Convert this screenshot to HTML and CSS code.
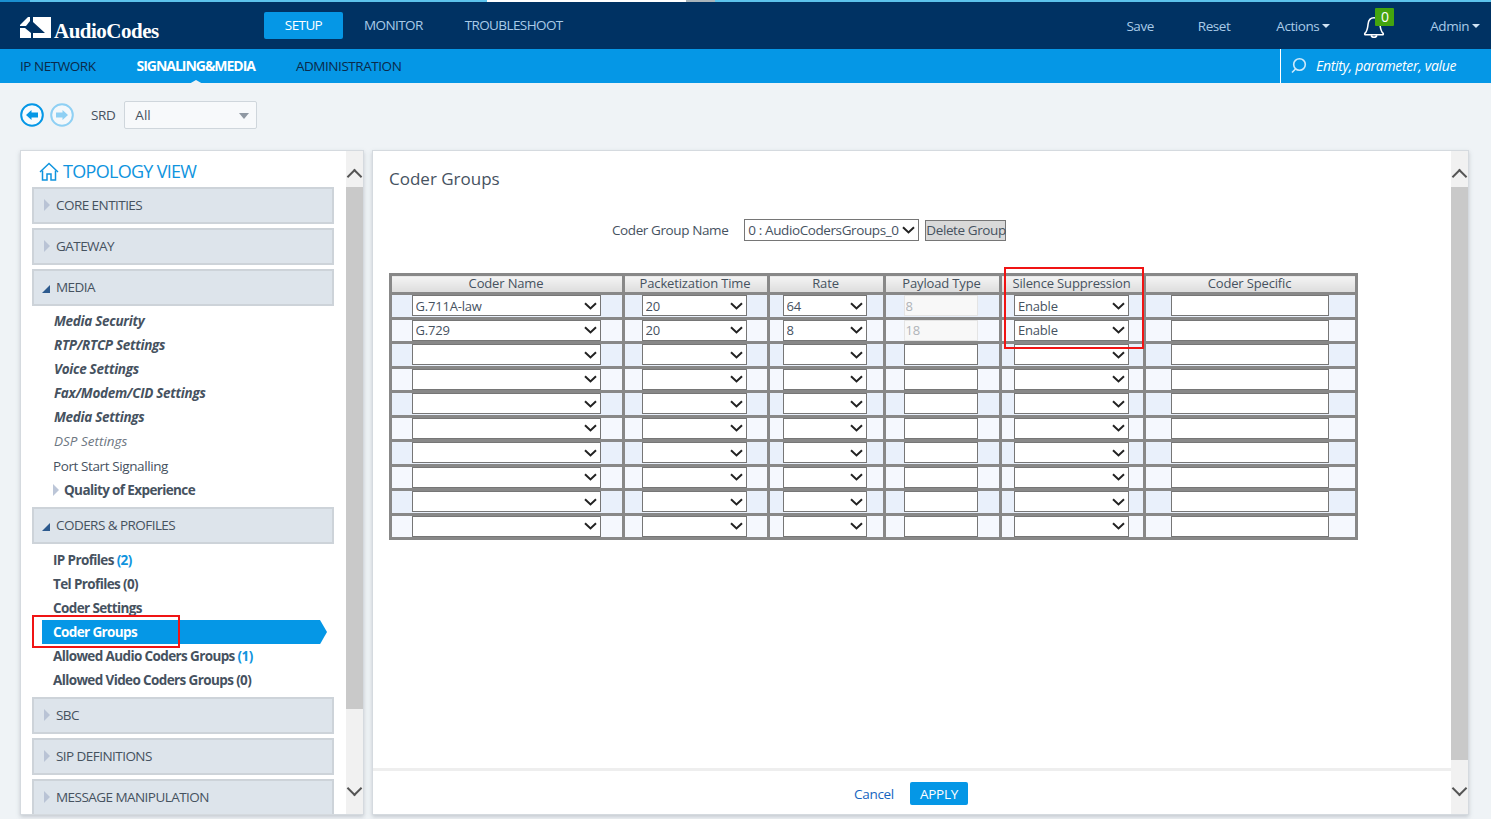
FILE: index.html
```html
<!DOCTYPE html>
<html lang="en">
<head>
    <meta charset="UTF-8">
    <title>AudioCodes - Coder Groups</title>
    <link rel="stylesheet" href="styles.css">
</head>
<body>
    <div class="tabstrip"></div>
    <header class="topbar">
        <div class="logo">
            <svg class="logo-mark" width="31" height="21" viewBox="0 0 31 21">
                <path fill="#fff" d="M0 8 L8 0 L10 0 L10 4 L6 9 L0 9 Z"/>
                <path fill="#fff" d="M0 11 L5 11 L11 16 L11 21 L0 21 Z"/>
                <path fill="#fff" d="M13 0 L31 0 L31 21 L13 21 L13 16 L25 16 L13 5 Z"/>
            </svg>
            <span class="logo-text">AudioCodes</span>
        </div>
        <nav class="main-nav">
            <a class="main-tab active">SETUP</a>
            <a class="main-tab">MONITOR</a>
            <a class="main-tab">TROUBLESHOOT</a>
        </nav>
        <div class="top-actions">
            <a class="save">Save</a>
            <a class="reset">Reset</a>
            <a class="actions">Actions<i class="caret"></i></a>
            <span class="bell">
                <svg width="22" height="26" viewBox="0 0 24 26" fill="none" stroke="#fff" stroke-width="1.7">
                    <path d="M2 20 C5 17 5 14 5.5 10 C6 5 9 3 12 3 C15 3 18 5 18.5 10 C19 14 19 17 22 20 C22.5 21 22 21.5 21 21.5 L3 21.5 C2 21.5 1.5 21 2 20 Z"/>
                    <path d="M9 22 C9.5 25 14.5 25 15 22"/>
                </svg>
                <b class="badge">0</b>
            </span>
            <a class="admin">Admin<i class="caret"></i></a>
        </div>
    </header>

    <div class="subbar">
        <nav class="sub-nav">
            <a class="sub-tab">IP NETWORK</a>
            <a class="sub-tab active">SIGNALING&amp;MEDIA</a>
            <a class="sub-tab">ADMINISTRATION</a>
        </nav>
        <div class="search">
            <svg width="17" height="17" viewBox="0 0 17 17" fill="none" stroke="#cfeafb" stroke-width="1.6">
                <circle cx="9.5" cy="7.5" r="5.8"/>
                <path d="M5.5 12 L2 15.5"/>
            </svg>
            <span>Entity, parameter, value</span>
        </div>
    </div>

    <div class="toolbar">
        <span class="round-btn">
            <svg width="24" height="24" viewBox="0 0 24 24">
                <circle cx="12" cy="12" r="10.8" fill="#f7fbfe" stroke="#0597e6" stroke-width="2"/>
                <path fill="#0597e6" d="M6 12 L11.5 7 L11.5 9.5 L18 9.5 L18 14.5 L11.5 14.5 L11.5 17 Z"/>
            </svg>
        </span>
        <span class="round-btn">
            <svg width="24" height="24" viewBox="0 0 24 24">
                <circle cx="12" cy="12" r="10.8" fill="#f4f8fb" stroke="#8fd0f4" stroke-width="2"/>
                <path fill="#8fd0f4" d="M18 12 L12.5 7 L12.5 9.5 L6 9.5 L6 14.5 L12.5 14.5 L12.5 17 Z"/>
            </svg>
        </span>
        <label class="srd-label">SRD</label>
        <div class="srd-select">All<i class="srd-arrow"></i></div>
    </div>

    <div class="workspace">
        <aside class="panel side-panel">
            <div class="side-scroll">
                <h2 class="topology">
                    <svg width="20" height="19" viewBox="0 0 20 19" fill="none" stroke="#0f94de" stroke-width="1.5">
                        <path d="M1 10 L10 1.5 L19 10"/>
                        <path d="M3.5 8.5 L3.5 18 L8 18 L8 12 L12 12 L12 18 L16.5 18 L16.5 8.5"/>
                    </svg>
                    TOPOLOGY VIEW
                </h2>
                <div class="group closed">CORE ENTITIES</div>
                <div class="group closed">GATEWAY</div>
                <div class="group open">MEDIA</div>
                <ul class="items media-items">
                    <li class="strong-em">Media Security</li>
                    <li class="strong-em">RTP/RTCP Settings</li>
                    <li class="strong-em">Voice Settings</li>
                    <li class="strong-em">Fax/Modem/CID Settings</li>
                    <li class="strong-em">Media Settings</li>
                    <li class="light-em">DSP Settings</li>
                    <li>Port Start Signalling</li>
                    <li class="strong sub-parent">Quality of Experience</li>
                </ul>
                <div class="group open">CODERS &amp; PROFILES</div>
                <ul class="items coder-items">
                    <li class="strong">IP Profiles <span class="count">(2)</span></li>
                    <li class="strong">Tel Profiles (0)</li>
                    <li class="strong">Coder Settings</li>
                    <li class="strong selected">Coder Groups</li>
                    <li class="strong">Allowed Audio Coders Groups <span class="count">(1)</span></li>
                    <li class="strong">Allowed Video Coders Groups (0)</li>
                </ul>
                <div class="group closed">SBC</div>
                <div class="group closed">SIP DEFINITIONS</div>
                <div class="group closed">MESSAGE MANIPULATION</div>
            </div>
            <div class="scrollbar side-bar">
                <span class="chev up"></span>
                <span class="thumb"></span>
                <span class="chev down"></span>
            </div>
        </aside>

        <main class="panel main-panel">
            <div class="main-col">
                <div class="main-body">
                    <h1 class="page-title">Coder Groups</h1>
                    <div class="group-picker">
                        <label>Coder Group Name</label>
                        <select class="group-select"><option>0 : AudioCodersGroups_0</option></select>
                        <button class="delete-btn">Delete Group</button>
                    </div>
                    <table class="coders">
                        <colgroup>
                            <col class="c1"><col class="c2"><col class="c3"><col class="c4"><col class="c5"><col class="c6">
                        </colgroup>
                        <thead>
                            <tr>
                                <th>Coder Name</th>
                                <th>Packetization Time</th>
                                <th>Rate</th>
                                <th>Payload Type</th>
                                <th>Silence Suppression</th>
                                <th>Coder Specific</th>
                            </tr>
                        </thead>
                        <tbody id="coder-rows"></tbody>
                    </table>
                </div>
                <div class="main-footer">
                    <a class="cancel">Cancel</a>
                    <button class="apply">APPLY</button>
                </div>
            </div>
            <div class="scrollbar main-bar">
                <span class="chev up"></span>
                <span class="thumb"></span>
                <span class="chev down"></span>
            </div>
        </main>
    </div>

    <!-- annotations drawn on the screenshot -->
    <div class="mark mark-suppression"></div>
    <div class="mark mark-groups"></div>

    <script>
        var rows = [
            ['G.711A-law', '20', '64', '8', 'Enable'],
            ['G.729', '20', '8', '18', 'Enable']
        ];
        var body = document.getElementById('coder-rows');
        function sel(cls, val) {
            return '<select class="' + cls + '"><option>' + val + '</option></select>';
        }
        for (var i = 0; i < 10; i++) {
            var r = rows[i] || ['', '', '', '', ''];
            var tr = document.createElement('tr');
            tr.innerHTML =
                '<td>' + sel('s-name', r[0]) + '</td>' +
                '<td>' + sel('s-time', r[1]) + '</td>' +
                '<td>' + sel('s-rate', r[2]) + '</td>' +
                '<td><input class="i-type" value="' + r[3] + '"' + (r[3] ? ' disabled' : '') + '></td>' +
                '<td>' + sel('s-supp', r[4]) + '</td>' +
                '<td><input class="i-spec"></td>';
            body.appendChild(tr);
        }
    </script>
</body>
</html>
```

FILE: styles.css
```css
* {
    margin: 0;
    padding: 0;
    box-sizing: border-box;
}

html, body {
    height: 819px;
    overflow: hidden;
}

body {
    background: #eff3f6;
    font-family: "Open Sans", "Noto Sans", sans-serif;
    font-size: 13px;
    color: #46525f;
}

/* browser tab strip left at the top of the picture */
.tabstrip {
    height: 2px;
    background: linear-gradient(to right,
        #1a8fd0 0, #1a8fd0 30px,
        #5cc3ec 30px, #5cc3ec 487px,
        #fff 487px, #fff 686px,
        #a9b4ba 686px, #a9b4ba 715px,
        #5cc3ec 715px);
}

/* top bars */
.topbar {
    height: 47px;
    background: #003263;
    display: flex;
    align-items: center;
    padding-left: 20px;
    color: #a9cbe8;
}

.logo {
    display: flex;
    align-items: flex-end;
    width: 244px;
    padding-top: 4px;
}

.logo-mark {
    flex: none;
}

.logo-text {
    font-family: "Liberation Serif", serif;
    font-size: 21px;
    font-weight: bold;
    letter-spacing: -0.5px;
    color: #fff;
    margin: 0 0 -6px 3px;
}

.main-nav {
    display: flex;
    align-items: center;
}

.main-tab {
    font-size: 13.5px;
    padding: 0 21px;
    line-height: 27px;
    letter-spacing: -0.6px;
}

.main-tab.active {
    background: #0597e6;
    color: #fff;
    border-radius: 2px;
    width: 79px;
    padding: 0;
    text-align: center;
}

.top-actions {
    margin-left: auto;
    display: flex;
    align-items: center;
    font-size: 13.5px;
    letter-spacing: -0.45px;
    padding-right: 11px;
}

.reset { margin-left: 44px; }
.actions { margin-left: 46px; }

.caret {
    display: inline-block;
    border: 4px solid transparent;
    border-top: 4px solid #cfe3f4;
    border-bottom: 0;
    margin-left: 3px;
    vertical-align: 3px;
}

.bell {
    position: relative;
    margin-left: 33px;
    width: 24px;
    height: 26px;
    top: 1px;
}

.badge {
    position: absolute;
    left: 12px;
    top: -6px;
    width: 19px;
    height: 18px;
    background: #44a40e;
    border-radius: 1px;
    color: #fff;
    font-weight: normal;
    font-size: 14px;
    line-height: 18px;
    text-align: center;
}

.admin { margin-left: 43px; }

.subbar {
    height: 34px;
    background: #0597e6;
    display: flex;
    align-items: stretch;
    padding-left: 20px;
}

.sub-nav {
    display: flex;
    align-items: center;
    gap: 41px;
    padding-bottom: 1px;
}

.sub-tab {
    font-size: 13.5px;
    letter-spacing: -0.45px;
    color: #0a2a4a;
    position: relative;
}

.sub-tab.active {
    color: #fff;
    font-weight: bold;
    font-size: 14px;
    letter-spacing: -1.03px;
}

.sub-tab.active::after {
    content: "";
    position: absolute;
    left: 50%;
    margin-left: -7px;
    bottom: -9px;
    border: 7px solid transparent;
    border-top: 0;
    border-bottom: 4px solid #eff3f6;
}

.search {
    margin-left: auto;
    width: 211px;
    border-left: 1px solid #fff;
    display: flex;
    align-items: center;
    gap: 9px;
    padding: 0 0 1px 9px;
    color: #fff;
    font-style: italic;
    font-size: 14px;
    letter-spacing: -0.3px;
}

/* toolbar with back / forward and SRD */
.toolbar {
    height: 67px;
    display: flex;
    align-items: center;
    padding-left: 20px;
    padding-bottom: 3px;
}

.round-btn {
    width: 24px;
    height: 24px;
    margin-right: 6px;
}

.srd-label {
    margin-left: 11px;
    font-size: 13.5px;
    letter-spacing: -0.4px;
}

.srd-select {
    position: relative;
    width: 133px;
    height: 28px;
    margin-left: 9px;
    padding-left: 10px;
    line-height: 27px;
    font-size: 13.5px;
    background: #f7f9fb;
    border: 1px solid #cfd6dc;
    border-radius: 2px;
}

.srd-arrow {
    position: absolute;
    right: 7px;
    top: 11px;
    border: 5px solid transparent;
    border-top: 6px solid #8f98a3;
    border-bottom: 0;
}

/* panels */
.workspace {
    display: flex;
    gap: 8px;
    padding-left: 20px;
    height: 665px;
}

.panel {
    background: #fff;
    border: 1px solid #d5dadf;
    box-shadow: 0 2px 4px rgba(120, 130, 140, 0.35);
    display: flex;
    overflow: hidden;
}

.side-panel {
    width: 344px;
}

.main-panel {
    width: 1097px;
}

.side-scroll {
    flex: 1;
    padding: 9px 0 0 11px;
    overflow: hidden;
}

.scrollbar {
    width: 17px;
    background: #f1f1f1;
    display: flex;
    flex-direction: column;
    align-items: stretch;
    position: relative;
    padding-top: 36px;
}

.thumb {
    background: #c9c9c9;
}

.side-bar .thumb { height: 522px; }
.main-bar .thumb { height: 573px; }

.chev {
    position: absolute;
    left: 1px;
    width: 13px;
    height: 11px;
}

.chev::before {
    content: "";
    position: absolute;
    left: 2px;
    width: 9px;
    height: 9px;
    border-left: 2.5px solid #555;
    border-top: 2.5px solid #555;
}

.chev.up { top: 17px; }
.chev.up::before { top: 3px; transform: rotate(45deg); }
.chev.down { bottom: 18px; }
.chev.down::before { top: -2px; transform: rotate(225deg); }

/* tree */
.topology {
    display: flex;
    align-items: center;
    gap: 4px;
    height: 26px;
    padding: 0 0 4px 7px;
    font-size: 18px;
    font-weight: normal;
    letter-spacing: -0.7px;
    color: #0f94de;
}

.group {
    position: relative;
    width: 302px;
    height: 37px;
    margin-bottom: 4px;
    padding-left: 22px;
    background: #dde4eb;
    border: 2px solid #cdd3d9;
    line-height: 33px;
    font-size: 13.5px;
    letter-spacing: -0.55px;
}

.group::before {
    content: "";
    position: absolute;
    top: 10px;
    left: 10px;
    border: 6px solid transparent;
    border-left: 6px solid #b9c3d5;
    border-right: 0;
}

.group.open::before {
    top: 14px;
    left: 8px;
    border: 0;
    border-bottom: 8px solid #2d5a8e;
    border-left: 8px solid transparent;
}

.topology + .group {
    margin-top: 1px;
}

.items {
    list-style: none;
}

.media-items {
    margin-top: -1px;
    margin-bottom: 5px;
}

.coder-items {
    margin-top: 4px;
    margin-bottom: 5px;
}

.items li {
    height: 24.1px;
    line-height: 24px;
    padding-left: 21px;
    font-size: 13.5px;
    letter-spacing: -0.4px;
    white-space: nowrap;
}

.strong { font-weight: bold; letter-spacing: -0.62px !important; }
.strong-em { font-weight: bold; font-style: italic; letter-spacing: -0.3px !important; padding-left: 22px !important; }
.light-em { font-style: italic; color: #6d7782; letter-spacing: 0 !important; padding-left: 22px !important; }

.sub-parent {
    position: relative;
    padding-left: 32px !important;
}

.sub-parent::before {
    content: "";
    position: absolute;
    left: 21px;
    top: 6px;
    border: 6.5px solid transparent;
    border-left: 6px solid #bcc6d8;
    border-right: 0;
}

.count {
    color: #0f94de;
}

.selected {
    position: relative;
    width: 285px;
    margin-left: 10px;
    padding-left: 11px !important;
    background: #0597e6;
    color: #fff;
    clip-path: polygon(0 0, 278px 0, 285px 50%, 278px 100%, 0 100%);
}

/* main */
.main-col {
    flex: 1;
    display: flex;
    flex-direction: column;
    min-width: 0;
}

.main-body {
    flex: 1;
    padding: 15px 16px 0;
}

.page-title {
    font-size: 17px;
    font-weight: normal;
    line-height: 26px;
}

.group-picker {
    display: flex;
    align-items: center;
    margin-top: 26px;
    padding-left: 223px;
    height: 24px;
    font-size: 13.5px;
    letter-spacing: -0.4px;
}

select, input {
    font-family: "Open Sans", "Noto Sans", sans-serif;
    color: #46525f;
    background: #fff;
    border: 1px solid #767676;
}

select {
    appearance: none;
    -webkit-appearance: none;
    padding-left: 3px;
    background: #fff url("data:image/svg+xml,%3Csvg xmlns='http://www.w3.org/2000/svg' width='13' height='8' viewBox='0 0 13 8'%3E%3Cpath d='M1 1.2 L6.5 6.4 L12 1.2' fill='none' stroke='%23222' stroke-width='2'/%3E%3C/svg%3E") no-repeat right 3px center;
}

.group-select {
    width: 175px;
    height: 22px;
    margin-left: 16px;
    font-size: 13.5px;
    letter-spacing: -0.4px;
}

.delete-btn {
    width: 81px;
    height: 21px;
    margin-left: 6px;
    font: inherit;
    letter-spacing: inherit;
    white-space: nowrap;
    color: #46525f;
    background: #d9d9d9;
    border: 1px solid #767676;
}

.coders {
    table-layout: fixed;
    border-collapse: collapse;
    width: 966px;
    margin: 31px 0 0 0;
    border: 3px solid #888;
}

.c1 { width: 233px; }
.c2 { width: 145px; }
.c3 { width: 116px; }
.c4 { width: 116px; }
.c5 { width: 144px; }
.c6 { width: 212px; }

.coders th, .coders td {
    border: 3px solid #888;
    text-align: center;
    padding: 0 4px 0 0;
}

.coders th {
    height: 18px;
    padding: 0 2px 1px 0;
    font-size: 13px;
    font-weight: normal;
    line-height: 15px;
    background: linear-gradient(#f4f4f4, #dcdcdc);
    letter-spacing: -0.15px;
}

.coders td {
    height: 24.5px;
    background: #f5f8fe;
}

.coders td:first-child,
.coders td:nth-child(5),
.coders td:last-child {
    padding-right: 2px;
}

.coders tr:nth-child(odd) td {
    background: #e9f0fb;
}

.coders select, .coders input {
    display: block;
    margin: 0 auto;
    height: 21px;
    font-size: 13px;
    letter-spacing: -0.2px;
}

.coders input:disabled {
    background: #f8f8f8;
    border-color: #e4e4e4;
    color: #b0b4b8;
}

.s-name { width: 189px; }
.s-time { width: 105px; }
.s-rate { width: 84px; }
.s-supp { width: 115px; }
.i-type { width: 74px; padding-left: 1px; }
.i-spec { width: 158px; }

.main-footer {
    flex: none;
    height: 46px;
    border-top: 3px solid #eeeeee;
    display: flex;
    align-items: center;
    justify-content: center;
    gap: 16px;
    padding: 2px 2px 0 0;
    font-size: 13.5px;
}

.cancel {
    color: #1565c0;
    letter-spacing: -0.3px;
}

.apply {
    width: 58px;
    height: 23px;
    background: #0597e6;
    color: #fff;
    border: none;
    border-radius: 2px;
    font: inherit;
    letter-spacing: -0.3px;
}

/* red boxes over the picture */
.mark {
    position: absolute;
    border: 2px solid #f01414;
}

.mark-suppression {
    left: 1004px;
    top: 267px;
    width: 140px;
    height: 82px;
}

.mark-groups {
    left: 32px;
    top: 615px;
    width: 148px;
    height: 33px;
}
```
